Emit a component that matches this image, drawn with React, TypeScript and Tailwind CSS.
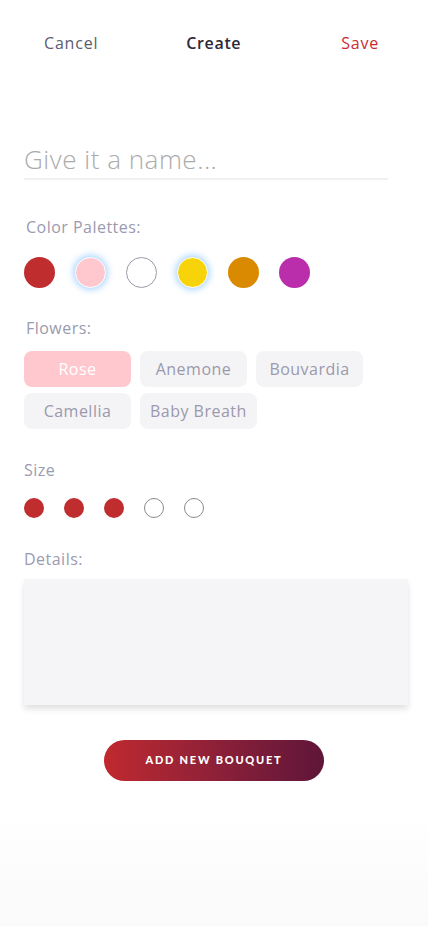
import { useState } from "react";

const palette = [
  { color: "bg-[#bf2d2e]", ring: "" },
  { color: "bg-[#ffc8ce]", ring: "border border-white shadow-[0_0_6px_2px_rgba(130,195,255,0.65)]" },
  { color: "bg-white", ring: "border border-[#9b9aa8]" },
  { color: "bg-[#f7d40a]", ring: "border border-white shadow-[0_0_6px_2px_rgba(130,195,255,0.65)]" },
  { color: "bg-[#da8a00]", ring: "" },
  { color: "bg-[#bb2eab]", ring: "" },
];

const flowers = ["Rose", "Anemone", "Bouvardia", "Camellia", "Baby Breath"];

const App = () => {
  const [selected, setSelected] = useState("Rose");
  const [size, setSize] = useState(3);

  return (
    <div className="min-h-[926px] flex flex-col bg-white font-['Open_Sans',sans-serif] tracking-[0.03em]">
      <div className="px-[24px]">
        {/* Header */}
        <div className="flex items-center pt-[33px] h-[53px] text-[16px] leading-[20px]">
          <button className="ml-[20px] text-[#5d5b70] tracking-[0.05em]">Cancel</button>
          <h1 className="ml-[88px] font-semibold text-[#2b2a35] tracking-[0.04em]">Create</h1>
          <button className="ml-auto mr-[25px] text-[#cc2b2f] tracking-[0.05em]">Save</button>
        </div>

        {/* Name */}
        <input
          placeholder="Give it a name..."
          className="mt-[88px] block w-[364px] h-[39px] border-b-2 border-[#f0f0f2] text-[26px] font-light tracking-[0.02em] text-[#555] placeholder:text-[#ababab] outline-none"
        />

        {/* Palettes */}
        <p className="mt-[37px] ml-[2px] text-[16px] leading-[20px] text-[#9b9aaf]">Color Palettes:</p>
        <div className="mt-[20px] flex gap-[20px]">
          {palette.map((p, i) => (
            <div key={i} className={`w-[31px] h-[31px] rounded-full ${p.color} ${p.ring}`} />
          ))}
        </div>

        {/* Flowers */}
        <p className="mt-[30px] ml-[2px] text-[16px] leading-[20px] text-[#9b9aaf]">Flowers:</p>
        <div className="mt-[13px] flex flex-wrap gap-x-[9px] gap-y-[6px] w-[360px]">
          {flowers.map((f) => (
            <button
              key={f}
              onClick={() => setSelected(f)}
              className={
                f === selected
                  ? "h-[36px] min-w-[107px] px-[10px] rounded-[8px] bg-[#ffc8ce] text-white text-[16px] tracking-[0.03em]"
                  : "h-[36px] min-w-[107px] px-[10px] rounded-[8px] bg-[#f4f4f6] text-[#9b99ab] text-[16px] tracking-[0.03em]"
              }
            >
              {f}
            </button>
          ))}
        </div>

        {/* Size */}
        <p className="mt-[31px] text-[16px] leading-[20px] text-[#9b9aaf]">Size</p>
        <div className="mt-[18px] flex gap-[20px]">
          {[1, 2, 3, 4, 5].map((n) => (
            <button
              key={n}
              onClick={() => setSize(n)}
              className={
                n <= size
                  ? "w-[20px] h-[20px] rounded-full bg-[#bf2d2e]"
                  : "w-[20px] h-[20px] rounded-full bg-white border border-[#8a8a8a]"
              }
            />
          ))}
        </div>

        {/* Details */}
        <p className="mt-[31px] text-[16px] leading-[20px] text-[#9b9aaf]">Details:</p>
        <textarea className="mt-[10px] block w-[384px] h-[126px] bg-[#f5f5f7] resize-none outline-none shadow-[0_4px_6px_rgba(0,0,0,0.12)]" />

        {/* Button */}
        <div className="mt-[35px] flex justify-center">
          <button className="w-[220px] h-[41px] rounded-full bg-gradient-to-r from-[#c0292e] to-[#5f1539] text-white text-[11px] font-black tracking-[0.16em] font-['Lato',sans-serif]">
            ADD NEW BOUQUET
          </button>
        </div>
      </div>
      <div className="flex-1 mt-[28px] bg-gradient-to-b from-white to-[#fafafa]" />
    </div>
  );
};

export default App;
